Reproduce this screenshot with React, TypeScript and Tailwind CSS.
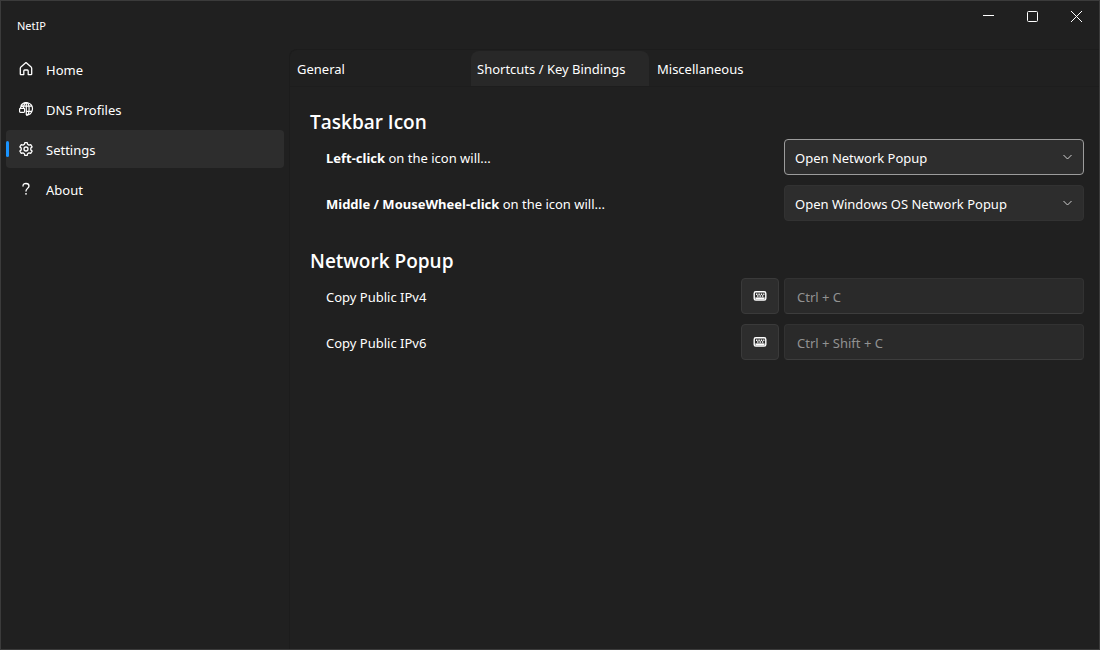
import { useState } from "react";
import type { ReactNode } from "react";
import clsx from "clsx";

const iconProps = {
  width: 16,
  height: 16,
  viewBox: "0 0 16 16",
  fill: "none",
  stroke: "currentColor",
  "aria-hidden": true,
} as const;

const HomeIcon = () => (
  <svg {...iconProps} strokeWidth="1.3" strokeLinejoin="round">
    <path d="M8 1.6 L13.1 5.9 Q13.7 6.5 13.7 7.4 V12.9 Q13.7 13.6 13 13.6 H10.2 V9.9 Q10.2 9 9.3 9 H6.7 Q5.8 9 5.8 9.9 V13.6 H3 Q2.3 13.6 2.3 12.9 V7.4 Q2.3 6.5 2.9 5.9 Z" />
  </svg>
);

const GlobeIcon = () => (
  <svg {...iconProps} strokeWidth="1.2">
    <path d="M2.8 4.9 A6.2 6.2 0 1 1 8.2 14.1 M3 5.2 H13.9 M8 10.4 H13.9" />
    <path d="M5.7 5 C6.2 2.8 7.1 1.6 8.3 1.6 C10 1.6 11.1 4.4 11.1 7.9 C11.1 11.4 10.2 14.1 8.3 14.1 M8.3 1.6 V14.1" />
    <rect x="1.6" y="7.4" width="5" height="4" rx="0.8" />
    <path d="M2.6 7.2 V6.6 A1.5 1.5 0 0 1 5.6 6.6 V7.2" />
  </svg>
);

const GearIcon = () => (
  <svg {...iconProps} strokeWidth="1.3" strokeLinejoin="round">
    <path d="M6.8 1.6 H9.2 L9.6 3.3 L11 4.1 L12.7 3.6 L14.1 5.9 L12.8 7.1 V8.9 L14.1 10.1 L12.7 12.4 L11 11.9 L9.6 12.7 L9.2 14.4 H6.8 L6.4 12.7 L5 11.9 L3.3 12.4 L1.9 10.1 L3.2 8.9 V7.1 L1.9 5.9 L3.3 3.6 L5 4.1 L6.4 3.3 Z" />
    <circle cx="8" cy="8" r="2" />
  </svg>
);

const QuestionIcon = () => (
  <svg {...iconProps} strokeWidth="1.3" strokeLinecap="round">
    <path d="M5 5 C5 3.2 6.3 2.5 8 2.5 C9.8 2.5 11 3.4 11 5 C11 7.2 8 7.6 8 10" />
    <circle cx="8" cy="12.8" r="0.9" fill="currentColor" stroke="none" />
  </svg>
);

const KeyboardIcon = () => (
  <svg {...iconProps} strokeWidth="1.4">
    <rect x="2.2" y="3.8" width="11.6" height="8.2" rx="1.6" />
    <path d="M4 6.2 H12.4" strokeDasharray="1.4 1" />
    <path d="M5.1 8 H12" strokeDasharray="1.4 1" />
    <path d="M3.4 10.3 H12.6" strokeWidth="1.8" />
  </svg>
);

const ChevronIcon = () => (
  <svg {...iconProps} className="pointer-events-none absolute right-2 top-2.5 text-[#d0d0d0]">
    <path d="M3.5 6 L7.5 10 L11.5 6" />
  </svg>
);

const navItems = [
  { label: "Home", icon: <HomeIcon /> },
  { label: "DNS Profiles", icon: <GlobeIcon /> },
  { label: "Settings", icon: <GearIcon /> },
  { label: "About", icon: <QuestionIcon /> },
];

const tabs = ["General", "Shortcuts / Key Bindings", "Miscellaneous"];

const clickActions = ["Open Network Popup", "Open Windows OS Network Popup"];

const TitleBar = () => (
  <header className="flex h-12 shrink-0 items-start justify-between">
    <h1 className="pl-4 pt-4 text-[11px] leading-[18px]">NetIP</h1>
    <div className="flex">
      <button aria-label="Minimize" className="flex h-8 w-11 items-center justify-center">
        <svg {...iconProps}>
          <path d="M2 6.5 H13" />
        </svg>
      </button>
      <button aria-label="Maximize" className="flex h-8 w-11 items-center justify-center">
        <svg {...iconProps}>
          <rect x="2.5" y="2.5" width="10" height="10" rx="1" />
        </svg>
      </button>
      <button aria-label="Close" className="flex h-8 w-11 items-center justify-center">
        <svg {...iconProps}>
          <path d="M2 2 L13 13 M13 2 L2 13" />
        </svg>
      </button>
    </div>
  </header>
);

type SectionProps = {
  title: string;
  children: ReactNode;
};

const Section = ({ title, children }: SectionProps) => (
  <section className="flex flex-col gap-2.5">
    <h2 className="-mb-2 font-['Open_Sans',sans-serif] text-[19px] font-semibold leading-[30px]">
      {title}
    </h2>
    {children}
  </section>
);

type SelectRowProps = {
  id: string;
  children: ReactNode;
  value: string;
  focused?: boolean;
};

const SelectRow = ({ id, children, value, focused }: SelectRowProps) => (
  <div className="flex items-center justify-between pl-4">
    <label htmlFor={id} className="pt-0.5">
      {children}
    </label>
    <div className="relative w-[300px]">
      <select
        id={id}
        defaultValue={value}
        className={clsx(
          "block h-9 w-full appearance-none rounded border bg-[#2d2d2d] pl-2.5 pr-8 pt-0.5 outline-none",
          focused ? "border-[#9c9c9c]" : "border-[#323232]"
        )}
      >
        {clickActions.map((action) => (
          <option key={action}>{action}</option>
        ))}
      </select>
      <ChevronIcon />
    </div>
  </div>
);

type ShortcutRowProps = {
  id: string;
  label: string;
  keys: string;
};

const ShortcutRow = ({ id, label, keys }: ShortcutRowProps) => (
  <div className="flex items-center justify-between pl-4">
    <label htmlFor={id} className="pt-0.5">
      {label}
    </label>
    <div className="flex items-center gap-[5px]">
      <button
        aria-label={`Record ${label}`}
        className="flex h-9 w-[38px] items-center justify-center rounded border border-[#3a3a3a] bg-[#2d2d2d]"
      >
        <KeyboardIcon />
      </button>
      <input
        id={id}
        readOnly
        value={keys}
        className="h-9 w-[300px] rounded border border-[#323232] border-b-[#3d3d3d] bg-[#2a2a2a] px-3 pt-0.5 text-[#929292] outline-none"
      />
    </div>
  </div>
);

const App = () => {
  const [page, setPage] = useState("Settings");
  const [tab, setTab] = useState(tabs[1]);

  return (
    <div className="flex min-h-screen flex-col border border-[#3b3b3b] bg-[#202020] font-['Noto_Sans','Open_Sans',sans-serif] text-[13px] leading-5 text-white">
      <TitleBar />
      <div className="flex flex-1">
        <nav className="flex w-72 shrink-0 flex-col gap-0.5 px-[5px] pt-px">
          {navItems.map(({ label, icon }) => (
            <button
              key={label}
              onClick={() => setPage(label)}
              className={clsx(
                "relative flex h-[38px] items-center gap-3 rounded pl-3 text-left",
                page === label && "bg-[#2d2d2d]"
              )}
            >
              {page === label && (
                <span className="absolute left-0 h-4 w-[3px] rounded-full bg-[#1a94ff]" />
              )}
              {icon}
              <span className="pt-0.5">{label}</span>
            </button>
          ))}
        </nav>

        <main className="flex-1 rounded-tl-lg border-l border-t border-[#1c1c1c]">
          <div role="tablist" className="flex gap-0.5 border-b border-[#1d1d1d] pl-px pt-px">
            {tabs.map((name) => (
              <button
                key={name}
                role="tab"
                aria-selected={tab === name}
                onClick={() => setTab(name)}
                className={clsx(
                  "h-[35px] w-[178px] rounded-t-lg px-1.5 text-left",
                  tab === name && "bg-[#282828]"
                )}
              >
                {name}
              </button>
            ))}
          </div>

          <div className="flex flex-col gap-[25px] pl-5 pr-[15px] pt-5">
            <Section title="Taskbar Icon">
              <SelectRow id="left-click" value={clickActions[0]} focused>
                <b>Left-click</b> on the icon will...
              </SelectRow>
              <SelectRow id="middle-click" value={clickActions[1]}>
                <b>Middle / MouseWheel-click</b> on the icon will...
              </SelectRow>
            </Section>
            <Section title="Network Popup">
              <ShortcutRow id="copy-ipv4" label="Copy Public IPv4" keys="Ctrl + C" />
              <ShortcutRow id="copy-ipv6" label="Copy Public IPv6" keys="Ctrl + Shift + C" />
            </Section>
          </div>
        </main>
      </div>
    </div>
  );
};

export default App;
